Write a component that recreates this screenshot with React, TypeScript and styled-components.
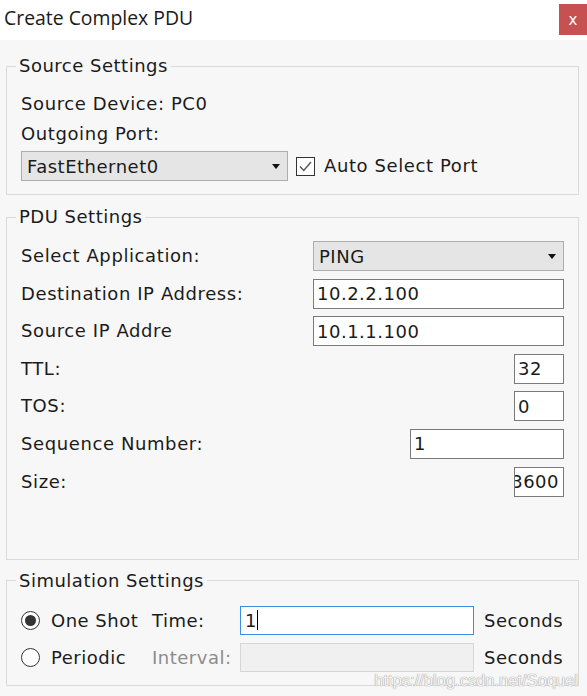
import React from "react";
import styled, { createGlobalStyle } from "styled-components";

const Global = createGlobalStyle`
  html, body { margin: 0; padding: 0; background: #f7f7f7; }
  body { font-family: "DejaVu Sans", Verdana, sans-serif; color: #1b1b1b; }
  * { box-sizing: border-box; }
`;

const Window = styled.div`
  position: relative;
  width: 587px;
  height: 696px;
  background: #f7f7f7;
  overflow: hidden;
`;

const TitleBar = styled.div`
  height: 40px;
  background: #ffffff;
  display: flex;
  align-items: center;
  padding-left: 4px;
`;

const Title = styled.div`
  font-family: "Open Sans", "Noto Sans", sans-serif;
  font-size: 19.4px;
  color: #1a1a1a;
  margin-top: -5px;
`;

const CloseButton = styled.div`
  margin-left: auto;
  align-self: flex-start;
  margin-top: 4px;
  width: 28px;
  height: 31px;
  background: #c75050;
  color: #fff;
  display: flex;
  align-items: center;
  justify-content: center;
  font-family: "DejaVu Sans", sans-serif;
  font-size: 15px;
`;

const Body = styled.div`
  padding: 15px 8px 0 6px;
  display: flex;
  flex-direction: column;
`;

const Group = styled.fieldset<{ $mt?: number; $pt: number; $pb: number }>`
  margin: ${(p) => p.$mt ?? 0}px 0 0 0;
  padding: ${(p) => p.$pt}px 14px ${(p) => p.$pb}px 14px;
  border: 1px solid #dadada;
  min-width: 0;
`;

const Legend = styled.legend`
  font-size: 18px;
  line-height: 22px;
  letter-spacing: 0.5px;
  padding: 0 3px;
  margin-left: -5px;
  color: #1b1b1b;
`;

const Text = styled.div<{ $h?: number }>`
  font-size: 18px;
  letter-spacing: 0.6px;
  line-height: ${(p) => p.$h ?? 30}px;
  height: ${(p) => p.$h ?? 30}px;
  white-space: nowrap;
`;

const PortRow = styled.div`
  display: flex;
  align-items: center;
  margin-top: 2px;
`;

const Combo = styled.div<{ $w: number }>`
  width: ${(p) => p.$w}px;
  height: 30px;
  background: #e5e5e5;
  border: 1px solid #adadad;
  display: flex;
  align-items: center;
  padding: 0 6px 0 5px;
  font-size: 18px;
  letter-spacing: 0.5px;
`;

const ComboText = styled.span`
  flex: 1;
`;

const Arrow = styled.span`
  width: 0;
  height: 0;
  border-left: 4px solid transparent;
  border-right: 4px solid transparent;
  border-top: 5px solid #111;
  margin-right: 1px;
`;

const CheckBox = styled.div`
  width: 19px;
  height: 19px;
  border: 1px solid #333;
  background: #fff;
  margin: 0 9px 0 8px;
  display: flex;
  align-items: center;
  justify-content: center;
`;

const Rows = styled.div`
  display: flex;
  flex-direction: column;
  gap: 7.6px;
`;

const FieldRow = styled.div`
  display: flex;
  align-items: center;
  justify-content: space-between;
  height: 30px;
`;

const Field = styled.div<{ $w: number; $end?: boolean }>`
  width: ${(p) => p.$w}px;
  height: 30px;
  background: #fff;
  border: 1px solid #7a7a7a;
  display: flex;
  align-items: center;
  justify-content: ${(p) => (p.$end ? "flex-end" : "flex-start")};
  padding: 0 ${(p) => (p.$end ? 4 : 3)}px 0 3px;
  font-size: 18px;
  letter-spacing: 0.5px;
  overflow: hidden;
  white-space: nowrap;
`;

const SimGrid = styled.div`
  display: grid;
  grid-template-columns: 131px 88px 234px auto;
  grid-auto-rows: 29px;
  row-gap: 8px;
  align-items: center;
`;

const RadioCell = styled.div`
  display: flex;
  align-items: center;
  gap: 11px;
  font-size: 18px;
  letter-spacing: 0.5px;
`;

const Radio = styled.div<{ $on?: boolean }>`
  width: 19px;
  height: 19px;
  border-radius: 50%;
  border: 1px solid #333;
  background: #fff;
  display: flex;
  align-items: center;
  justify-content: center;
  &::after {
    content: "";
    display: ${(p) => (p.$on ? "block" : "none")};
    width: 11px;
    height: 11px;
    border-radius: 50%;
    background: #333;
  }
`;

const SimLabel = styled.div<{ $dim?: boolean }>`
  font-size: 18px;
  letter-spacing: 0.5px;
  color: ${(p) => (p.$dim ? "#8c8c8c" : "#1b1b1b")};
`;

const SimInput = styled.div<{ $focus?: boolean; $disabled?: boolean }>`
  height: 29px;
  border: 1px solid ${(p) => (p.$focus ? "#3d8ee6" : p.$disabled ? "#d6d6d6" : "#7a7a7a")};
  background: ${(p) => (p.$disabled ? "#f0f0f0" : "#fff")};
  display: flex;
  align-items: center;
  padding-left: 4px;
  font-size: 18px;
`;

const Caret = styled.span`
  display: inline-block;
  width: 1px;
  height: 20px;
  background: #000;
  margin-left: 1px;
`;

const Seconds = styled.div`
  font-size: 18px;
  letter-spacing: 0.5px;
  padding-left: 10px;
`;

const Watermark = styled.div`
  position: absolute;
  right: 9px;
  bottom: 6px;
  font-family: "Liberation Sans", Arial, sans-serif;
  font-size: 16.5px;
  color: rgba(255, 255, 255, 0.92);
  text-shadow: 0 0 1px #8f8f8f, 0 0 1px #a8a8a8;
`;

export default function App() {
  return (
    <Window>
      <Global />
      <TitleBar>
        <Title>Create Complex PDU</Title>
        <CloseButton>x</CloseButton>
      </TitleBar>
      <Body>
        <Group $pt={12} $pb={13}>
          <Legend>Source Settings</Legend>
          <Text>Source Device: PC0</Text>
          <Text>Outgoing Port:</Text>
          <PortRow>
            <Combo $w={267}>
              <ComboText>FastEthernet0</ComboText>
              <Arrow />
            </Combo>
            <CheckBox>
              <svg width="15" height="15" viewBox="0 0 15 15">
                <path d="M2 7.5 L5.8 11.5 L13 3" fill="none" stroke="#555" strokeWidth="1.4" />
              </svg>
            </CheckBox>
            <Text>Auto Select Port</Text>
          </PortRow>
        </Group>
        <Group $mt={11} $pt={13} $pb={62}>
          <Legend>PDU Settings</Legend>
          <Rows>
            <FieldRow>
              <Text>Select Application:</Text>
              <Combo $w={251}>
                <ComboText>PING</ComboText>
                <Arrow />
              </Combo>
            </FieldRow>
            <FieldRow>
              <Text>Destination IP Address:</Text>
              <Field $w={251}>10.2.2.100</Field>
            </FieldRow>
            <FieldRow>
              <Text>Source IP Addre</Text>
              <Field $w={251}>10.1.1.100</Field>
            </FieldRow>
            <FieldRow>
              <Text>TTL:</Text>
              <Field $w={50}>32</Field>
            </FieldRow>
            <FieldRow>
              <Text>TOS:</Text>
              <Field $w={50}>0</Field>
            </FieldRow>
            <FieldRow>
              <Text>Sequence Number:</Text>
              <Field $w={154}>1</Field>
            </FieldRow>
            <FieldRow>
              <Text>Size:</Text>
              <Field $w={50} $end>
                13600
              </Field>
            </FieldRow>
          </Rows>
        </Group>
        <Group $mt={10} $pt={14} $pb={13}>
          <Legend>Simulation Settings</Legend>
          <SimGrid>
            <RadioCell>
              <Radio $on />
              One Shot
            </RadioCell>
            <SimLabel>Time:</SimLabel>
            <SimInput $focus>
              1<Caret />
            </SimInput>
            <Seconds>Seconds</Seconds>
            <RadioCell>
              <Radio />
              Periodic
            </RadioCell>
            <SimLabel $dim>Interval:</SimLabel>
            <SimInput $disabled />
            <Seconds>Seconds</Seconds>
          </SimGrid>
        </Group>
      </Body>
      <Watermark>https://blog.csdn.net/Soquel</Watermark>
    </Window>
  );
}
